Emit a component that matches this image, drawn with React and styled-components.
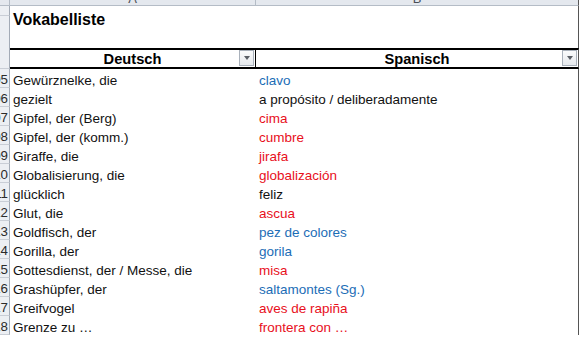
import React from 'react';
import styled, { createGlobalStyle } from 'styled-components';

const GlobalStyle = createGlobalStyle`
  html, body {
    margin: 0;
    padding: 0;
    background: #fff;
  }
  body {
    font-family: "Liberation Sans", Arial, sans-serif;
    overflow: hidden;
  }
`;

// vocabulary rows: row number, german, spanish, colour of the spanish word
const words = [
  [105, 'Gewürznelke, die', 'clavo', 'blue'],
  [106, 'gezielt', 'a propósito / deliberadamente', 'black'],
  [107, 'Gipfel, der (Berg)', 'cima', 'red'],
  [108, 'Gipfel, der (komm.)', 'cumbre', 'red'],
  [109, 'Giraffe, die', 'jirafa', 'red'],
  [110, 'Globalisierung, die', 'globalización', 'red'],
  [111, 'glücklich', 'feliz', 'black'],
  [112, 'Glut, die', 'ascua', 'red'],
  [113, 'Goldfisch, der', 'pez de colores', 'blue'],
  [114, 'Gorilla, der', 'gorila', 'blue'],
  [115, 'Gottesdienst, der / Messe, die', 'misa', 'red'],
  [116, 'Grashüpfer, der', 'saltamontes (Sg.)', 'blue'],
  [117, 'Greifvogel', 'aves de rapiña', 'red'],
  [118, 'Grenze zu …', 'frontera con …', 'red'],
];

const inkColors = {
  black: '#111',
  red: '#e8101c',
  blue: '#1c6db6',
};

const Sheet = styled.div`
  display: grid;
  grid-template-columns: 10px 246px 323px;
  width: 579px;
  font-size: 13.33px;
  color: #111;
`;

const ColumnHead = styled.div`
  height: 5px;
  border-bottom: 1px solid #b4bcc6;
  border-right: ${p => (p.last ? '1px solid #555' : '1px solid #b4bcc6')};
  background: #e4e8ee;
  overflow: hidden;
  display: flex;
  align-items: flex-end;
  justify-content: center;
  color: #4a4f57;
  line-height: 13px;
  font-size: 13px;
`;

const RowHead = styled.div`
  height: ${p => p.h}px;
  box-sizing: border-box;
  background: #eceff3;
  border-right: 1px solid #a3abb6;
  border-bottom: ${p => (p.noLine ? 'none' : '1px solid #c9ced6')};
  display: flex;
  justify-content: flex-end;
  align-items: flex-end;
  overflow: hidden;
  color: #2b2b2b;
  font-size: 13.33px;
  line-height: 14px;
  padding-right: 1px;
`;

const RowHeadStack = styled.div`
  display: flex;
  flex-direction: column;
`;

const TitleCell = styled.div`
  grid-column: span 2;
  height: 42px;
  box-sizing: border-box;
  padding: 5px 3px 0;
  border-right: 1px solid #555;
  font-size: 16px;
  font-weight: bold;
  color: #000;
`;

const HeadCell = styled.div`
  height: 21px;
  box-sizing: border-box;
  border-top: 2px solid #000;
  border-bottom: 2px solid #000;
  border-right: ${p => (p.last ? '1px solid #555' : '1px solid #000')};
  display: flex;
  align-items: center;
  justify-content: center;
  position: relative;
  font-size: 14.67px;
  font-weight: bold;
  color: #000;
`;

const FilterButton = styled.span`
  position: absolute;
  right: 1px;
  top: 0;
  width: 15px;
  height: 16px;
  box-sizing: border-box;
  border: 1px solid #a9b1bb;
  background: linear-gradient(#fafbfc, #e6e9ed);
  display: flex;
  align-items: center;
  justify-content: center;

  &::after {
    content: '';
    border-left: 3.5px solid transparent;
    border-right: 3.5px solid transparent;
    border-top: 4px solid #5a5f66;
  }
`;

const Cell = styled.div`
  height: 19px;
  box-sizing: border-box;
  padding: 0 3px;
  display: flex;
  align-items: flex-end;
  white-space: nowrap;
  line-height: 14px;
  font-size: 13.5px;
  color: ${p => inkColors[p.ink] || '#111'};
  border-right: ${p => (p.last ? '1px solid #555' : 'none')};
`;

export default function App() {
  return (
    <>
      <GlobalStyle />
      <Sheet>
        <ColumnHead />
        <ColumnHead>A</ColumnHead>
        <ColumnHead last>B</ColumnHead>

        <RowHeadStack>
          <RowHead h={10} />
          <RowHead h={32} noLine />
        </RowHeadStack>
        <TitleCell>Vokabelliste</TitleCell>

        <RowHead h={21} />
        <HeadCell>
          Deutsch
          <FilterButton />
        </HeadCell>
        <HeadCell last>
          Spanisch
          <FilterButton />
        </HeadCell>

        {words.map(([nr, de, es, ink]) => (
          <React.Fragment key={nr}>
            <RowHead h={19}>{nr}</RowHead>
            <Cell>{de}</Cell>
            <Cell ink={ink} last>{es}</Cell>
          </React.Fragment>
        ))}
      </Sheet>
    </>
  );
}
